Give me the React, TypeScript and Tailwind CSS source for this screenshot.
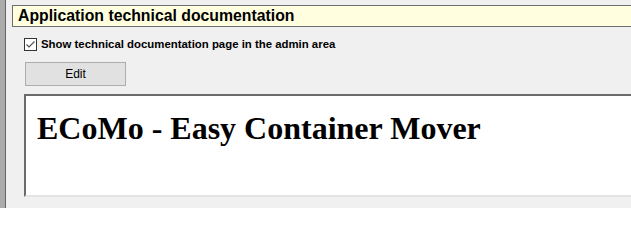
export default function App() {
  return (
    <div className="flex h-[208px] w-[631px] overflow-hidden bg-[#f0f0f0] font-['Liberation_Sans',Arial,sans-serif]">
      {/* left frame edge */}
      <div className="w-[5px] shrink-0 bg-[#ababab]" />
      <div className="w-px shrink-0 bg-[#646464]" />

      <div className="flex min-w-0 flex-1 flex-col pt-[5px] pl-[6px]">
        <div className="-mr-4 flex h-[22px] items-center border border-r-0 border-[#6e6e6e] bg-[#ffffe0] pl-[5px]">
          <h2 className="text-[15.8px] leading-none font-bold whitespace-nowrap text-black">
            Application technical documentation
          </h2>
        </div>

        <div className="pl-[12px]">
          <label className="mt-[11px] flex h-[13px] items-center gap-[4px]">
            <span className="flex h-[13px] w-[13px] items-center justify-center border border-[#333] bg-white">
              <svg width="11" height="11" viewBox="0 0 11 11">
                <path d="M1.5 5.5 L4 8 L9.5 2.5" fill="none" stroke="#555" strokeWidth="1.2" />
              </svg>
            </span>
            <span className="text-[11.4px] leading-none font-bold whitespace-nowrap text-black">
              Show technical documentation page in the admin area
            </span>
          </label>

          <button className="mt-[11px] ml-px flex h-[24px] w-[101px] items-center justify-center border border-[#adadad] bg-[#e1e1e1] text-[12px] text-black">
            Edit
          </button>

          <div className="-mr-4 mt-[8px] h-[103px] border-2 border-r-0 border-t-[#6b6b6b] border-l-[#6b6b6b] border-b-[#e3e3e3] bg-white pl-[11px]">
            <h1 className="mt-[16px] text-[32px] leading-none font-bold whitespace-nowrap text-black font-['Liberation_Serif','Times_New_Roman',serif]">
              ECoMo - Easy Container Mover
            </h1>
          </div>
        </div>
      </div>
    </div>
  );
}
